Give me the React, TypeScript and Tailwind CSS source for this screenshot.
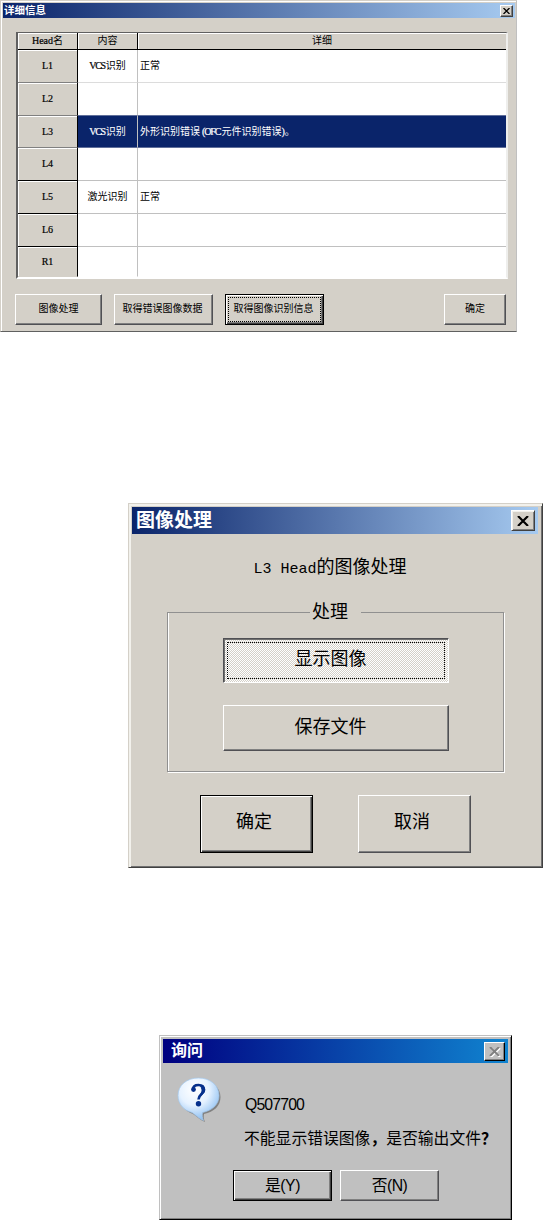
import React from 'react';

interface HeadRow {
  head: string;
  kind?: string;
  kindLatin?: string;
  detail?: React.ReactNode;
  selected?: boolean;
  height: string;
  headLine: string;
  cellLine: string;
}

const Latin: React.FC<{ children: React.ReactNode; className?: string }> = ({ children, className = '' }) => (
  <span className={`font-['Liberation_Serif',serif] text-[10px] [-webkit-text-stroke:0.2px] ${className}`}>{children}</span>
);

const ROWS: HeadRow[] = [
  { head: 'L1', kindLatin: 'VCS', kind: '识别', detail: '正常', height: 'h-[33px]', headLine: 'border-b-[#808080]', cellLine: 'border-b-[#dcdcdc]' },
  { head: 'L2', height: 'h-[33px]', headLine: 'border-b-[#808080]', cellLine: 'border-b-[#606f9a]' },
  {
    head: 'L3',
    kindLatin: 'VCS',
    kind: '识别',
    detail: (
      <>
        外形识别错误<Latin className="tracking-[-1.100px] ml-[2px]">(OFC</Latin>
        <span className="ml-px">元件识别错误</span>
        <Latin>)</Latin>。
      </>
    ),
    selected: true,
    height: 'h-[32px]',
    headLine: 'border-b-[#808080]',
    cellLine: 'border-b-[#606f9a]',
  },
  { head: 'L4', height: 'h-[33px]', headLine: 'border-b-black', cellLine: 'border-b-[#c0c0c0]' },
  { head: 'L5', kind: '激光识别', detail: '正常', height: 'h-[33px]', headLine: 'border-b-black', cellLine: 'border-b-[#c0c0c0]' },
  { head: 'L6', height: 'h-[33px]', headLine: 'border-b-black', cellLine: 'border-b-[#c0c0c0]' },
  { head: 'R1', height: 'h-[30px]', headLine: 'border-b-[#d4d0c8]', cellLine: 'border-b-white' },
];

const CloseIcon: React.FC<{ className: string }> = ({ className }) => (
  <svg viewBox="0 0 8 7" className={className} fill="none" stroke="currentColor" strokeWidth="1.5">
    <path d="M0.5 0L7.5 7M7.5 0L0.5 7" />
  </svg>
);

const QuestionIcon: React.FC = () => (
  <svg viewBox="0 0 44 46" className="w-[44px] h-[46px]">
    <defs>
      <radialGradient id="bubble" cx="40%" cy="28%" r="72%">
        <stop offset="0" stopColor="#ffffff" />
        <stop offset="0.5" stopColor="#e6f2ff" />
        <stop offset="1" stopColor="#8dbff2" />
      </radialGradient>
    </defs>
    <path
      d="M23 3C11.500 3 3 10.500 3 20C3 28 8 34 16 37C19 39 23 43 28 45C26.500 42 26.500 39.500 27 37C37 35 43.500 29 43.500 20C43.500 10.500 35 3 23 3Z"
      fill="#606060"
      opacity="0.65"
    />
    <path
      d="M21.500 1C9.500 1 1 8.500 1 18.500C1 27 7 33.500 15 35.500C18 37.500 22 41.500 26.500 43.500C25 40.500 25 38 25.500 35.500C35 33.500 42 27.500 42 18.500C42 8.500 33.500 1 21.500 1Z"
      fill="url(#bubble)"
      stroke="#a4c8ee"
      strokeWidth="0.7"
    />
    <path
      d="M16 12.500C16 9.500 18 8 21.500 8C25.500 8 27 10 27 12.800C27 16.800 21.500 17.500 21.500 22.500"
      fill="none"
      stroke="#06308c"
      strokeWidth="2.600"
    />
    <path d="M24.500 8.700C28.200 10 28.800 14.800 25.500 17.200L23 18.800C25.500 15.500 25.800 11.500 23 8.500Z" fill="#06308c" stroke="#06308c" />
    <circle cx="16.500" cy="12.500" r="2.400" fill="#06308c" />
    <circle cx="21.500" cy="26.800" r="2.700" fill="#06308c" />
  </svg>
);

// Raised push button, a black frame is added when it is the default one
const PushButton: React.FC<{ children: React.ReactNode; className: string; isDefault?: boolean }> = ({
  children,
  className,
  isDefault,
}) => (
  <button
    className={`flex items-center justify-center whitespace-nowrap shrink-0 ${
      isDefault
        ? 'border border-black shadow-[inset_1px_1px_#fff,inset_-1px_-1px_#404040,inset_-2px_-2px_#808080]'
        : 'border border-t-white border-l-white border-r-[#505054] border-b-[#505054] shadow-[inset_-1px_-1px_#808080]'
    } ${className}`}
  >
    {children}
  </button>
);

const DetailDialog: React.FC = () => (
  <section className="w-[517px] h-[332px] bg-[#d4d0c8] border border-t-[#d4d0c8] border-l-[#d4d0c8] border-r-[#c0c0c0] border-b-[#606060] shadow-[inset_1px_1px_#fff] pt-[2px] pl-[2px] text-[10px] leading-[12px]">
    <header className="w-[512px] h-[15px] flex items-center justify-between pl-px pr-[2px] bg-linear-to-r/srgb from-[#0a246a] to-[#a6caf0]">
      <h1 className="text-white font-bold text-[10.500px] relative -top-px">详细信息</h1>
      <button className="w-[13px] h-[12px] flex items-center justify-center bg-[#d4d0c8] border border-t-white border-l-white border-r-[#404040] border-b-[#404040] shadow-[inset_-1px_-1px_#808080]">
        <CloseIcon className="w-[7px] h-[6px]" />
      </button>
    </header>

    <div className="mt-[14px] ml-[13px] w-[492px] h-[247px] border-t border-t-[#606060] border-l-2 border-l-[#606060] border-r-2 border-r-[#eeeeec] border-b-2 border-b-white bg-white">
      <div className="flex h-[17px] bg-[#d4d0c8] border-b border-black">
        <div className="w-[60px] border-r border-black shadow-[inset_1px_1px_#fff] flex items-center justify-center">
          <Latin>Head</Latin>名
        </div>
        <div className="w-[60px] border-r border-black shadow-[inset_1px_1px_#fff] flex items-center justify-center">内容</div>
        <div className="flex-1 shadow-[inset_1px_1px_#fff] flex items-center justify-center">详细</div>
      </div>
      {ROWS.map(row => (
        <div key={row.head} className={`flex ${row.height}`}>
          <div
            className={`w-[60px] flex items-center justify-center bg-[#d4d0c8] border-b border-r border-r-black shadow-[inset_1px_1px_#fff] ${row.headLine}`}
          >
            <Latin>{row.head}</Latin>
          </div>
          <div
            className={`w-[60px] flex items-center justify-center border-b border-r border-r-[#c0c0c0] ${row.cellLine} ${
              row.selected ? 'bg-[#0a246a] text-white' : ''
            }`}
          >
            {row.kindLatin && <Latin className="tracking-[-1.300px] mr-[1px]">{row.kindLatin}</Latin>}
            {row.kind}
          </div>
          <div
            className={`flex-1 flex items-center pl-[2px] border-b ${row.cellLine} ${
              row.selected ? 'bg-[#0a246a] text-white' : ''
            }`}
          >
            <span>{row.detail}</span>
          </div>
        </div>
      ))}
    </div>

    <div className="mt-[15px] ml-[12px] flex w-[491px]">
      <PushButton className="w-[87px] h-[31px] pb-px">图像处理</PushButton>
      <PushButton className="w-[99px] h-[31px] ml-[12px] pb-px pr-[2px]">取得错误图像数据</PushButton>
      <PushButton className="w-[99px] h-[31px] ml-[12px] p-[2px]" isDefault>
        <span className="w-full h-full flex items-center justify-center border border-dotted border-black pb-px pr-[2px]">
          取得图像识别信息
        </span>
      </PushButton>
      <PushButton className="w-[62px] h-[31px] ml-auto pb-px">确定</PushButton>
    </div>
  </section>
);

const ImageDialog: React.FC = () => (
  <section className="ml-[128px] mt-[171px] w-[415px] h-[365px] bg-[#d4d0c8] border border-t-[#d4d0c8] border-l-[#d4d0c8] border-r-[#404040] border-b-[#404040] shadow-[inset_2px_2px_#f2f1ec,inset_-1px_-1px_#707070] pt-[3px] pl-[3px] text-[18px] leading-[20px]">
    <header className="w-[406px] h-[27px] flex items-center justify-between pl-[4px] pr-[3px] bg-linear-to-r/srgb from-[#0a246a] to-[#a6caf0]">
      <h2 className="text-white font-bold text-[19px]">图像处理</h2>
      <button className="w-[24px] h-[21px] flex items-center justify-center bg-[#d4d0c8] border border-t-white border-l-white border-r-[#404040] border-b-[#404040] shadow-[inset_1px_1px_#f2f1ec,inset_-1px_-1px_#808080]">
        <CloseIcon className="w-[12px] h-[10px]" />
      </button>
    </header>

    <p className="mt-[23px] w-[396px] text-center whitespace-pre">
      <span className="font-['Liberation_Mono',monospace] text-[15px]">L3 Head</span>的图像处理
    </p>

    <fieldset className="mt-[22px] ml-[35px] w-[337px] h-[170px] border border-[#909090] shadow-[inset_1px_0_#fff,1px_1px_#fff] flex flex-col items-center">
      <legend className="mx-auto w-[51px] h-[20px] pl-[2px]">处理</legend>
      <div className="flex flex-col items-center">
        <button className="mt-[16px] w-[226px] h-[45px] p-[3px] border border-t-[#505054] border-l-[#505054] border-r-white border-b-white shadow-[inset_1px_1px_#707070] bg-[repeating-conic-gradient(#ffffff_0_25%,#d4d0c8_0_50%)] bg-[length:2px_2px]">
          <span className="w-full h-full flex items-center justify-center border border-dotted border-black pr-[10px] pb-[4px]">
            显示图像
          </span>
        </button>
        <PushButton className="mt-[22px] w-[226px] h-[46px] pr-[10px] pb-[3px]">保存文件</PushButton>
      </div>
    </fieldset>

    <div className="mt-[23px] ml-[68px] flex gap-[45px]">
      <PushButton className="w-[113px] h-[58px] pr-[5px] pb-[4px]" isDefault>
        确定
      </PushButton>
      <PushButton className="w-[113px] h-[58px] pr-[5px] pb-[4px]">取消</PushButton>
    </div>
  </section>
);

const QueryDialog: React.FC = () => (
  <section className="ml-[159px] mt-[167px] w-[353px] h-[185px] bg-[#c0c0c0] border border-t-[#c0c0c0] border-l-[#c0c0c0] border-r-black border-b-black shadow-[inset_1px_1px_#fff,inset_-1px_-1px_#808080] pt-[3px] pl-[3px] text-[15.800px] leading-[18px]">
    <header className="w-[345px] h-[24px] flex items-center justify-between pl-[8px] pr-[3px] bg-linear-to-r/srgb from-[#000080] to-[#1084d0]">
      <h2 className="text-white font-bold text-[16px]">询问</h2>
      <button className="w-[21px] h-[19px] flex items-center justify-center bg-[#c0c0c0] border border-t-white border-l-white border-r-black border-b-black shadow-[inset_-1px_-1px_#808080]">
        <CloseIcon className="w-[11px] h-[9px] text-[#808080] drop-shadow-[1px_1px_0_#fff]" />
      </button>
    </header>

    <div className="flex mt-[14px] ml-[14px]">
      <QuestionIcon />
      <div className="ml-[23px] mt-[19px] whitespace-nowrap">
        <p className="pl-px tracking-[-0.850px]">Q507700</p>
        <p className="mt-[16px]">
          不能显示错误图像<b>，</b>是否输出文件<b>？</b>
        </p>
      </div>
    </div>

    <div className="mt-[22px] ml-[70px] flex gap-[8px]">
      <PushButton className="w-[99px] h-[31px] tracking-[-0.500px]" isDefault>
        是(Y)
      </PushButton>
      <PushButton className="w-[99px] h-[31px] tracking-[-0.500px]">否(N)</PushButton>
    </div>
  </section>
);

const App: React.FC = () => {
  return (
    <main
      lang="zh-CN"
      className="w-[543px] h-[1220px] overflow-hidden bg-white text-black font-['Liberation_Sans','Noto_Sans_CJK_SC',sans-serif]"
    >
      <DetailDialog />
      <ImageDialog />
      <QueryDialog />
    </main>
  );
};

export default App;
